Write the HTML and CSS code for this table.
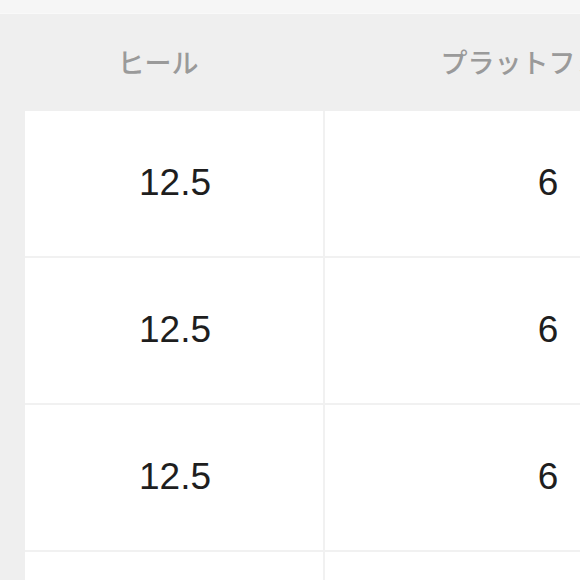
FILE: index.html
```html
<!DOCTYPE html>
<html lang="ja">
<head>
<meta charset="utf-8">
<link rel="stylesheet" href="styles.css">
</head>
<body>
<div class="sheet">
  <div class="head head-first">ヒール</div>
  <div class="head">プラットフォーム</div>

  <div class="gutter"></div>
  <div class="cell cell-first">12.5</div>
  <div class="cell">6</div>

  <div class="gutter"></div>
  <div class="cell cell-first">12.5</div>
  <div class="cell">6</div>

  <div class="gutter"></div>
  <div class="cell cell-first">12.5</div>
  <div class="cell">6</div>

  <div class="gutter"></div>
  <div class="cell cell-first"></div>
  <div class="cell"></div>
</div>
</body>
</html>
```
FILE: styles.css
```css
html, body {
  margin: 0;
  padding: 0;
  width: 580px;
  height: 580px;
  overflow: hidden;
  background: #f6f6f6;
}
body {
  padding-top: 13px;
  box-sizing: border-box;
  font-family: "Liberation Sans", "Noto Sans CJK JP", sans-serif;
}
.sheet {
  display: grid;
  grid-template-columns: 25px 300px 446px;
  grid-auto-rows: 147px;
  grid-template-rows: 97px;
  background: #efefef;
  border-top: 1px solid #f9f9f9;
  width: 771px;
}
.head {
  display: flex;
  align-items: center;
  justify-content: center;
  font-family: "Noto Sans CJK JP", sans-serif;
  font-size: 27px;
  font-weight: 500;
  color: #9a9a9a;
  padding-bottom: 3px;
  box-sizing: border-box;
}
.head-first {
  grid-column: 1 / 3;
  padding-right: 9px;
}
.gutter {
  background: #efefef;
}
.cell {
  background: #fff;
  border-bottom: 2px solid #f1f1f1;
  display: flex;
  align-items: center;
  justify-content: center;
  font-size: 37px;
  color: #1e1e1e;
  padding-bottom: 2px;
  box-sizing: border-box;
}
.cell-first {
  border-right: 2px solid #f1f1f1;
  padding-left: 2px;
}
```
